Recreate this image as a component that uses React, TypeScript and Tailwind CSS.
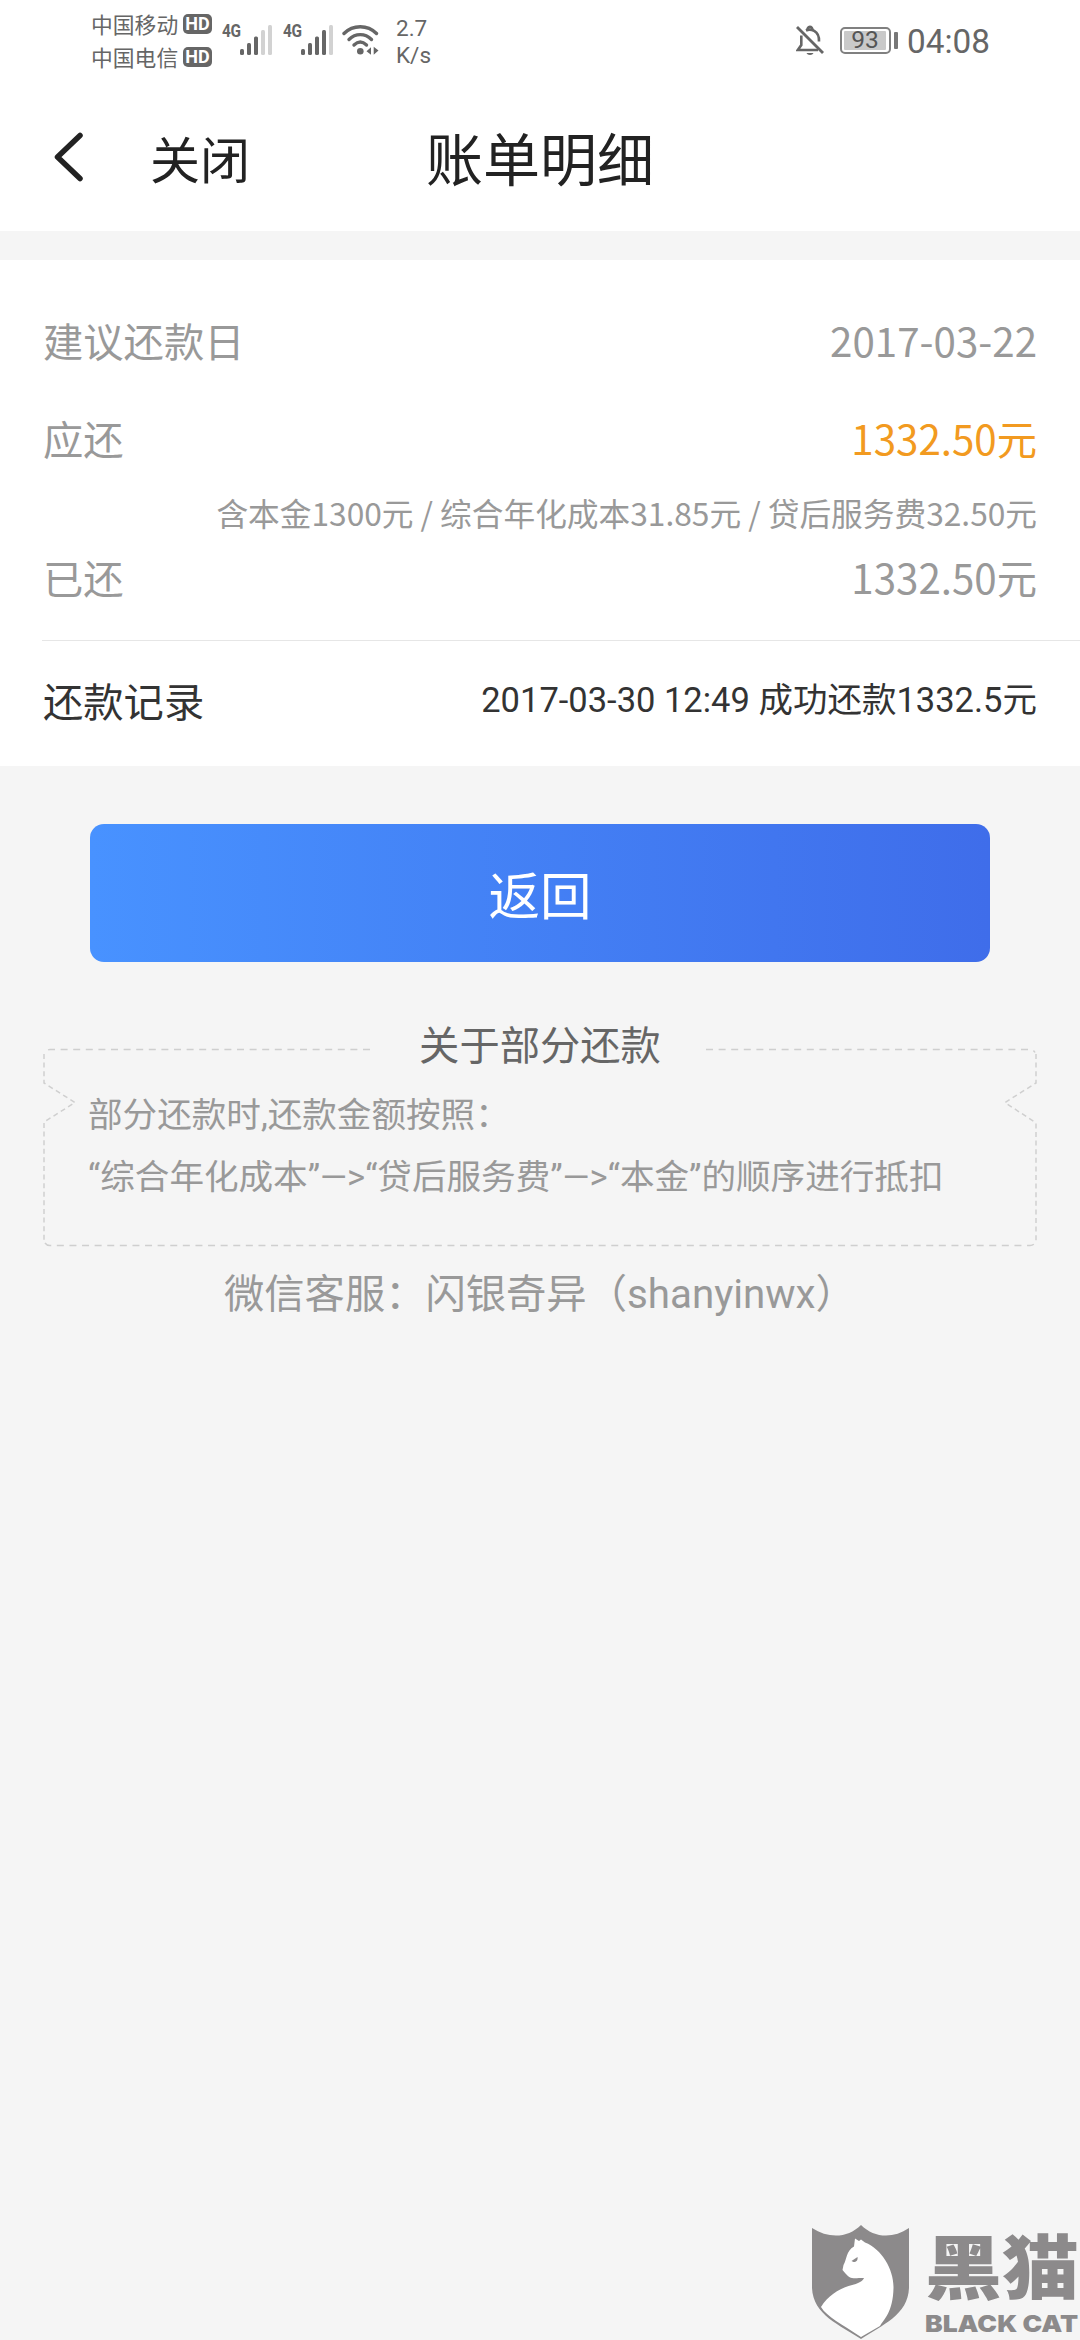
import type { ReactNode } from "react";

const NOTICE = [
  "部分还款时,还款金额按照：",
  "“综合年化成本”—>“贷后服务费”—>“本金”的顺序进行抵扣",
];

function HdBadge() {
  return (
    <span className="mt-px flex h-[20px] w-[29px] items-center justify-center rounded-[5px] bg-[#666] font-['Roboto'] text-[18px] font-bold leading-none text-white">
      HD
    </span>
  );
}

function Carrier({ name }: { name: string }) {
  return (
    <div className="flex h-[33px] items-center gap-[5px]">
      <span className="w-[87px] whitespace-nowrap text-[21.8px] leading-[33px]">{name}</span>
      <HdBadge />
    </div>
  );
}

function Signal({ level }: { level: number }) {
  const tops = [24, 18, 11.5, 5, 0];
  return (
    <div className="flex h-[30px] w-[51px]">
      <span className="w-[18px] origin-left scale-x-[0.88] whitespace-nowrap font-['Roboto'] text-[17.5px] font-bold leading-[13px] tracking-[-0.3px]">
        4G
      </span>
      <svg width="33" height="30" viewBox="0 0 33 30">
        {tops.map((top, i) => (
          <rect
            key={top}
            x={i * 7}
            y={top}
            width="4"
            height={30 - top}
            rx="1.5"
            fill={i < level ? "#666" : "#d2d2d2"}
          />
        ))}
      </svg>
    </div>
  );
}

function WifiIcon() {
  return (
    <svg width="37" height="30" viewBox="0 0 37 30" fill="none" stroke="#666" strokeWidth="3.4" strokeLinecap="round">
      <path d="M2 8.5C11 -.5 25.5 -.5 34.5 8.5" />
      <path d="M7 14.5C13.5 8 23 8 29.5 14.5" />
      <path d="M12 20C16 16.2 20.5 16.2 24.5 20" />
      <circle cx="18.3" cy="26.3" r="3.3" fill="#666" stroke="none" />
      <path d="M24.5 26.3l4.5-4v7.500zM36.5 25.5l-4.800-3.700v8z" fill="#666" stroke="none" />
    </svg>
  );
}

function BellOffIcon() {
  return (
    <svg width="28" height="31" viewBox="0 0 28 31" fill="none" stroke="#666" strokeWidth="2.6">
      <path d="M1 2L27 28" strokeWidth="2.8" />
      <path d="M5.3 10.5V20l-3.5 5H22" />
      <path d="M10 5.5C14 3.5 23.5 5 23 16.5" />
      <path d="M11.5 5.5C11 .8 16.5 .8 16.500 5" />
      <path d="M10.5 28h7c-1 2.600-6 2.600-7 0z" fill="#666" stroke="none" />
    </svg>
  );
}

function StatusBar() {
  return (
    <div className="flex h-[80px] items-start pl-[91px] pr-[90px] text-[#666]">
      <div className="mt-[7px]">
        <Carrier name="中国移动" />
        <Carrier name="中国电信" />
      </div>
      <div className="ml-[10px] mt-[25px] flex">
        <Signal level={3} />
        <div className="ml-[10px]">
          <Signal level={4} />
        </div>
        <div className="ml-[8px]">
          <WifiIcon />
        </div>
      </div>
      <div className="ml-[17px] mt-[15px] font-['Roboto'] text-[22.5px] leading-[26.5px]">
        <p>2.7</p>
        <p>K/s</p>
      </div>
      <div className="ml-auto mt-[25px] flex">
        <BellOffIcon />
        <div className="ml-[16px] mt-[2px] flex h-[27px] items-center gap-[3px]">
          <div className="h-[27px] w-[51px] rounded-[5px] border-2 border-[#808080] p-[2px]">
            <div className="flex h-full w-[42px] items-center justify-center rounded-[1px] bg-[#c9c9c9] font-['Roboto'] text-[24.5px] leading-none text-[#555]">
              93
            </div>
          </div>
          <span className="h-[17px] w-[4px] rounded-[1px] bg-[#777]" />
        </div>
        <span className="ml-[9px] mt-px font-['Roboto'] text-[33.3px] leading-[32px]">04:08</span>
      </div>
    </div>
  );
}

function Header() {
  return (
    <header className="h-[231px] bg-white">
      <StatusBar />
      <div className="relative flex h-[153px] items-center text-[#222]">
        <svg className="ml-[53px]" width="31" height="50" viewBox="0 0 31 50" fill="none">
          <path d="M27 3.5L4.5 25L27 46.5" stroke="#222" strokeWidth="5.5" strokeLinecap="round" strokeLinejoin="round" />
        </svg>
        <span className="ml-[66px] text-[50px] leading-none">关闭</span>
        <h1 className="absolute inset-x-0 text-center text-[57px] font-normal leading-none">账单明细</h1>
      </div>
    </header>
  );
}

function Row({ label, children }: { label: string; children: ReactNode }) {
  return (
    <div className="flex h-[58px] items-center justify-between text-[40.3px] leading-[58px] text-[#999]">
      <span>{label}</span>
      {children}
    </div>
  );
}

function Bill() {
  return (
    <section className="mt-[29px] h-[506px] bg-white pt-[51px]">
      <div className="px-[43px]">
        <Row label="建议还款日">
          <span>2017-03-22</span>
        </Row>
        <div className="mt-[40px]">
          <Row label="应还">
            <span className="text-[#f29a20]">1332.50元</span>
          </Row>
        </div>
        <p className="mt-[21px] text-right text-[31.7px] leading-[48px] text-[#999]">
          含本金1300元 / 综合年化成本31.85元 / 贷后服务费32.50元
        </p>
        <div className="mt-[12px]">
          <Row label="已还">
            <span>1332.50元</span>
          </Row>
        </div>
      </div>
      <div className="ml-[42px] mt-[34px] flex h-[120px] items-center justify-between border-t border-[#e6e6e6] pl-px pr-[43px] text-[#333]">
        <span className="text-[40.3px] leading-none">还款记录</span>
        <span className="font-['Roboto','Noto_Sans_CJK_SC',sans-serif] text-[34.5px] leading-none">
          2017-03-30 12:49 成功还款1332.5元
        </span>
      </div>
    </section>
  );
}

function Notice() {
  return (
    <section className="relative mx-[43px] mt-[58px] h-[227px]">
      <svg className="absolute inset-x-0 bottom-0" width="994" height="225" viewBox="0 0 994 225" fill="none" stroke="#cfcfcf" strokeWidth="1.5">
        <path d="M327 27.5H7a6 6 0 0 0-5 3M663 27.5H987a6 6 0 0 1 5 3M2 221a6 6 0 0 0 5 2.500H987a6 6 0 0 0 5-2.5" strokeDasharray="7 5.6" />
        <path d="M1 32V61L32 80.5L1 100V220M993 32V61L962 80.5L993 101V220" strokeDasharray="5 3.6" />
      </svg>
      <h2 className="text-center text-[40.3px] font-normal leading-[46px] text-[#666]">关于部分还款</h2>
      <div className="pl-[45px] pt-[18px] font-['Roboto','Noto_Sans_CJK_SC',sans-serif] text-[34.6px] leading-[62px] text-[#999]">
        {NOTICE.map((line) => (
          <p key={line} className="whitespace-nowrap">
            {line}
          </p>
        ))}
      </div>
    </section>
  );
}

function BlackCat() {
  return (
    <div className="absolute bottom-0 right-0 flex h-[116px] w-[269px] text-[#8c8a8b]">
      <svg width="100" height="116" viewBox="0 0 100 116">
        <path
          d="M1 4C18 15 37 14 50 1C63 14 82 15 98 4V64C97 91 71 101 50 115C29 101 2 91 1 64Z"
          fill="currentColor"
        />
        <path
          d="M44 14.5L48 17L50 15.5L54 18.5C71 25 83 46 82.5 64C82 88 73 95 69 102L50 113C31 100 16 93 10 83C18 70 31 63 43 60.5C48 59 52 57 53 54C47 54 44 54.5 41 54C38 54 35 50 31.5 46L32.5 41C36 35 35 27 43 22.5Z"
          fill="#fff"
        />
        <path d="M40.5 37l6-4c.5 3-1 5-4 5z" fill="currentColor" />
      </svg>
      <div className="ml-[14px] flex flex-col items-start whitespace-nowrap">
        <span className="mt-[6px] origin-left scale-x-[1.1] font-['Inter','Noto_Sans_CJK_SC',sans-serif] text-[70px] font-black leading-[78px]">
          黑猫
        </span>
        <span className="mt-[2px] origin-left scale-x-[1.15] font-['Inter'] text-[23px] font-black leading-[28px]">
          BLACK CAT
        </span>
      </div>
    </div>
  );
}

export default function App() {
  return (
    <div className="relative h-[2340px] w-[1080px] overflow-hidden bg-[#f5f5f5] font-['Noto_Sans_CJK_SC',sans-serif]">
      <Header />
      <Bill />
      <button className="mx-auto mt-[58px] flex h-[138px] w-[900px] items-center justify-center rounded-[14px] bg-linear-to-r from-[#4892ff] to-[#3f6dea] text-[51.5px] leading-none text-white">
        返回
      </button>
      <Notice />
      <p className="mt-[19px] pl-[224px] font-['Roboto','Noto_Sans_CJK_SC',sans-serif] text-[40.3px] leading-[58px] text-[#999]">
        微信客服：闪银奇异（shanyinwx）
      </p>
      <BlackCat />
    </div>
  );
}
